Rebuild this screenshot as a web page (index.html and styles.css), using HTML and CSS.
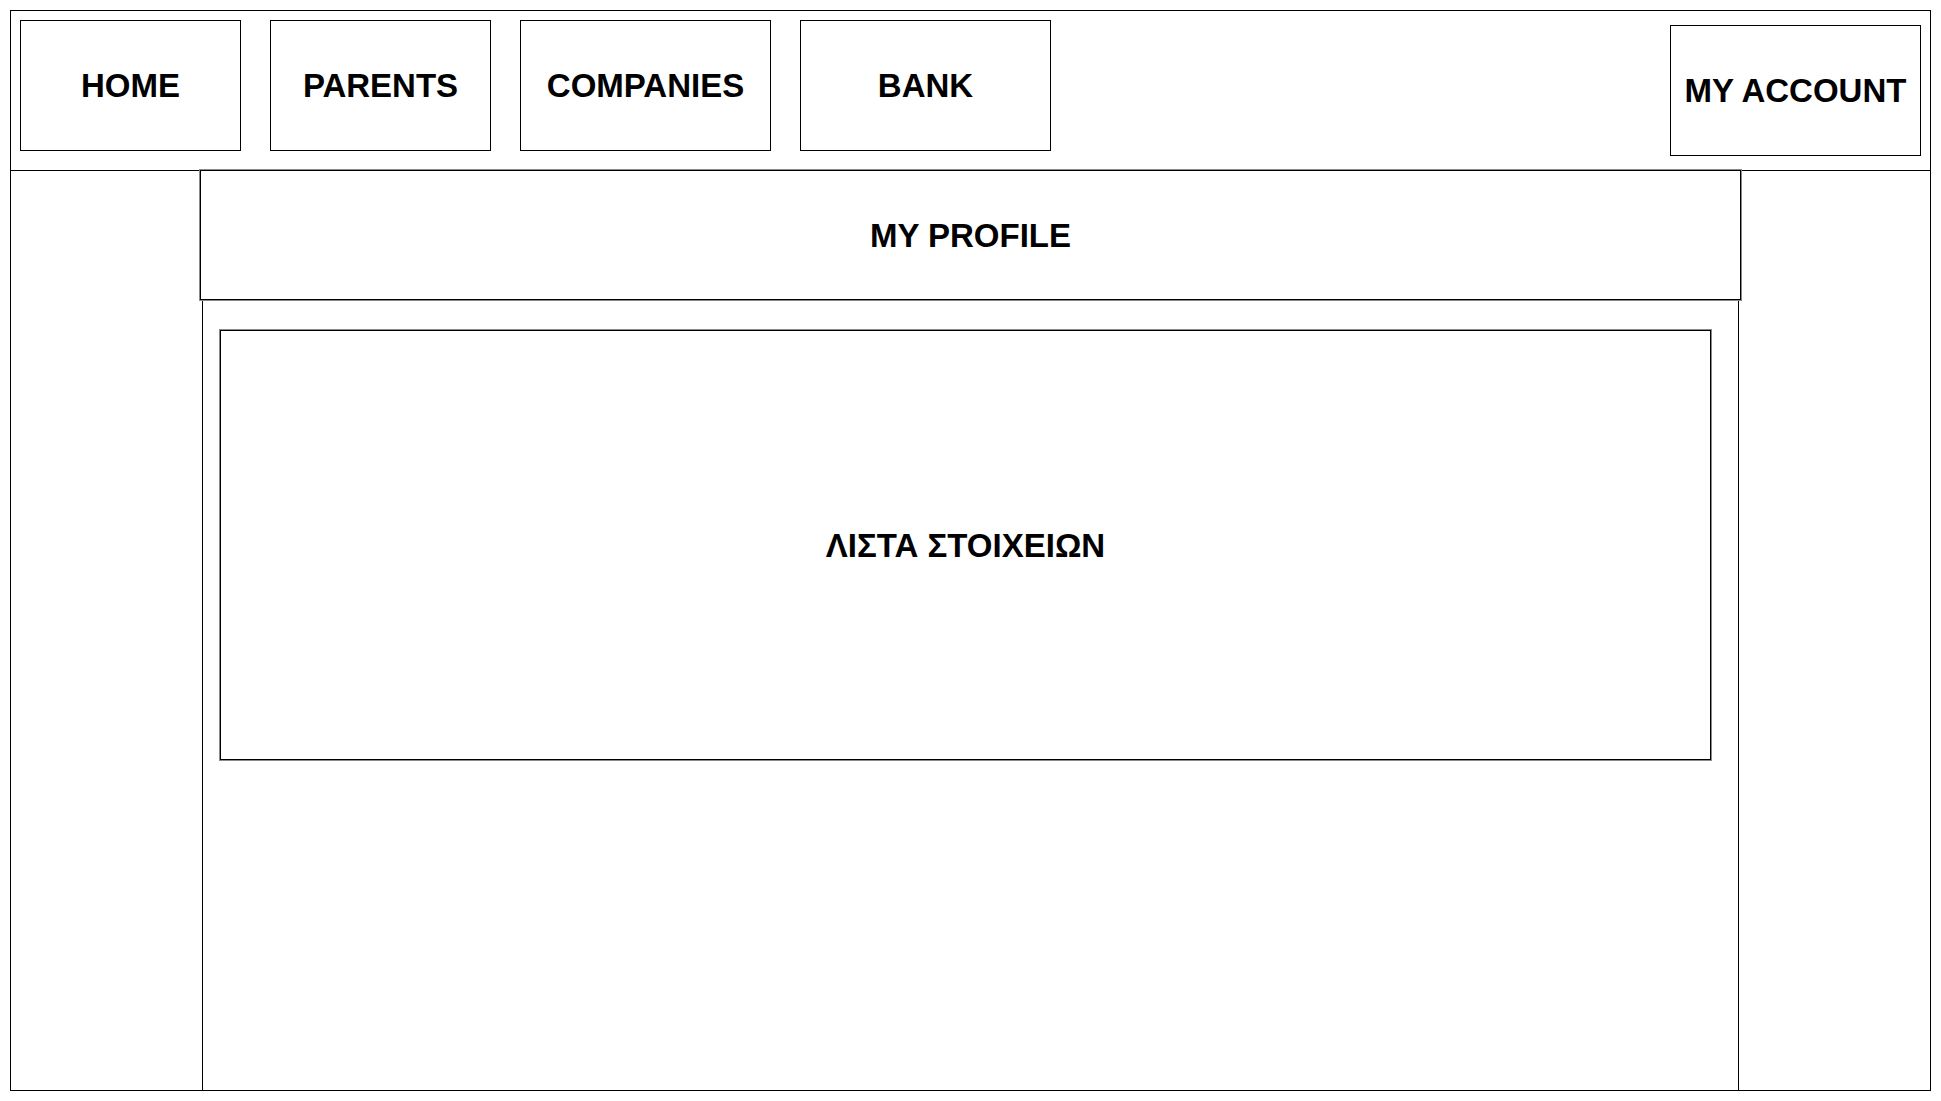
FILE: index.html
```html
<!DOCTYPE html>
<html>
<head>
<meta charset="utf-8">
<title>My Profile</title>
<link rel="stylesheet" href="styles.css">
</head>
<body>
<div class="frame">
  <header class="header">
    <nav class="nav">
      <div class="nav-item w-small">HOME</div>
      <div class="nav-item w-small">PARENTS</div>
      <div class="nav-item w-large">COMPANIES</div>
      <div class="nav-item w-large">BANK</div>
    </nav>
    <div class="nav-item account">MY ACCOUNT</div>
  </header>
  <main class="main">
    <div class="profile-title">MY PROFILE</div>
    <section class="column">
      <div class="list-box">ΛΙΣΤΑ ΣΤΟΙΧΕΙΩΝ</div>
    </section>
  </main>
</div>
</body>
</html>
```

FILE: styles.css
```css
html, body {
  margin: 0;
  padding: 0;
  background: #fff;
}

body {
  font-family: "Liberation Sans", Arial, sans-serif;
  font-weight: bold;
  font-size: 33px;
  color: #000;
}

.frame {
  box-sizing: border-box;
  margin: 10px;
  width: 1921px;
  height: 1081px;
  border: 1px solid #000;
  display: flex;
  flex-direction: column;
}

.header {
  box-sizing: border-box;
  height: 160px;
  border-bottom: 1px solid #000;
  display: flex;
  align-items: flex-start;
  padding: 9px;
}

.nav {
  display: flex;
  gap: 29px;
}

.nav-item {
  box-sizing: border-box;
  height: 131px;
  border: 1px solid #000;
  padding-top: 1px;
  display: flex;
  align-items: center;
  justify-content: center;
  white-space: nowrap;
}

.w-small { width: 221px; }
.w-large { width: 251px; }

.account {
  width: 251px;
  margin-left: auto;
  margin-top: 5px;
}

.main {
  flex: 1;
  display: flex;
  flex-direction: column;
  align-items: center;
  min-height: 0;
}

.profile-title {
  box-sizing: border-box;
  width: 1541px;
  height: 130px;
  margin-top: -1px;
  padding-top: 2px;
  border: 1px solid #000;
  box-shadow: 0 0 0 1px #8a8a8a;
  display: flex;
  align-items: center;
  justify-content: center;
  position: relative;
  z-index: 1;
}

.column {
  box-sizing: border-box;
  width: 1537px;
  flex: 1;
  border-left: 1px solid #000;
  border-right: 1px solid #000;
  padding: 30px 0 0 17px;
}

.list-box {
  box-sizing: border-box;
  width: 1491px;
  height: 430px;
  padding-top: 2px;
  border: 1px solid #000;
  box-shadow: 0 0 0 1px #8a8a8a;
  display: flex;
  align-items: center;
  justify-content: center;
}
```
